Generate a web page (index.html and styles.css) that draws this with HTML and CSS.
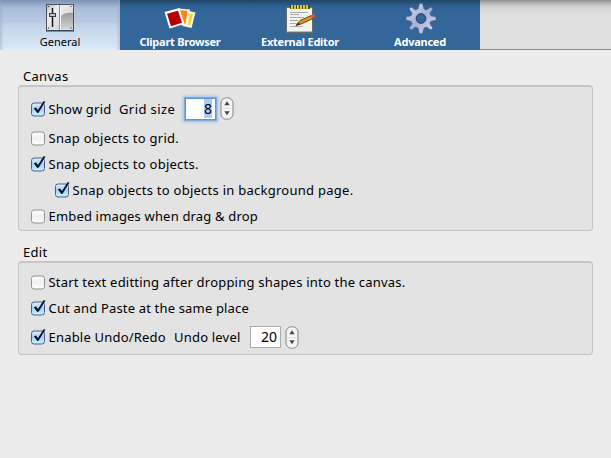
FILE: index.html
```
<!DOCTYPE html>
<html lang="en">
<head>
<meta charset="utf-8">
<title>Preferences</title>
<link rel="stylesheet" href="styles.css">
</head>
<body>
<svg width="0" height="0" class="defs" aria-hidden="true">
  <defs>
    <linearGradient id="blue" x2="0" y2="1"><stop stop-color="#e6f1ff"/><stop offset=".45" stop-color="#a5cef5"/><stop offset="1" stop-color="#c9f4ff"/></linearGradient>
    <linearGradient id="white" x2="0" y2="1"><stop stop-color="#fff"/><stop offset=".5" stop-color="#f0f0f0"/><stop offset="1" stop-color="#fff"/></linearGradient>
    <linearGradient id="metal" x2="1" y2="1"><stop stop-color="#b4b4b4"/><stop offset=".25" stop-color="#eee"/><stop offset="1" stop-color="#ccc"/></linearGradient>
    <linearGradient id="shade" x2="0" y2="1"><stop stop-color="#9c9c9c"/><stop offset="1" stop-color="#d5d5d5"/></linearGradient>
    <linearGradient id="steel" x2="1" y2="1"><stop stop-color="#d5dcef"/><stop offset=".5" stop-color="#a5b2d8"/><stop offset="1" stop-color="#e6e0f0"/></linearGradient>
    <symbol id="off" viewBox="0 0 18 18"><rect x="1.5" y="3" width="13" height="13" rx="2.5" fill="url(#white)" stroke="#929292"/></symbol>
    <symbol id="on" viewBox="0 0 18 18"><rect x="1.5" y="3" width="13" height="13" rx="2.5" fill="url(#blue)" stroke="#4f5c94"/><path d="M3.8 8.2 6 7.5 8 10 13.5 1.3 15.5 1.4 8.6 12.8 7.3 13Z" fill="#08142b"/></symbol>
    <symbol id="step" viewBox="0 0 14 23"><rect x="1" y=".8" width="12" height="21.4" rx="5.3" fill="#f5f5f5" stroke="#858585"/><path d="M2 11.5h10" stroke="#e1e1e1"/><path d="M4.3 8.3 7 4.3l2.7 4zM4.3 14.3 7 18.3l2.7-4z" fill="#484848"/></symbol>
  </defs>
</svg>
<nav class="toolbar">
  <div class="tab active">
    <svg width="36" height="36" viewBox="0 0 36 36"><rect x="4.5" y="4.5" width="27" height="26" fill="url(#metal)" stroke="#4b5058"/><path d="M18 17c3-4 8-5 13-4v17H18z" fill="url(#shade)"/><path d="M6 29h25" stroke="#ddd"/><path d="M17.5 5v25" stroke="#81929e"/><path d="M18.5 5v25" stroke="#f6f6f6"/><path d="M10.500 8v19" stroke="#11151a" stroke-width="1.5"/><rect x="7.5" y="13.5" width="6" height="3" fill="#b6c8dc" stroke="#263d57"/><path d="M6 6h1v1H6zM28.500 6h1v1h-1zM6 27.500h1v1H6zM28.500 27.500h1v1h-1z" fill="#222"/><path d="M4 31h28" stroke="#244267"/></svg>
    <span>General</span>
  </div>
  <div class="tab">
    <svg width="36" height="36" viewBox="0 0 36 36"><path d="m23 10 10.500 2.500-4 15.500-9-2z" fill="#f7f5e8"/><path d="m24 13 7 1.300-3 11-6-1z" fill="#efd726"/><path d="m16 8.500 12 1-2 16-9-.5z" fill="#fff4e4"/><path d="m18 10 7.500.8-2 13-5-.8z" fill="#ff850d"/><path d="m2.500 12 15-4 5 16-15 4.500z" fill="#fff"/><path d="m5 13.700 11-3 4 12-11 3.500z" fill="#b90000"/></svg>
    <span>Clipart Browser</span>
  </div>
  <div class="tab">
    <svg width="36" height="36" viewBox="0 0 36 36"><rect x="4.500" y="7.500" width="26" height="25" rx="1" fill="#f4f4ee" stroke="#696b68"/><path d="M5 31.500h25" stroke="#bbb"/><path d="M8 5h20v4H8z" fill="#4d4518"/><path d="M10 5v4.500m3-4.500v4.500m3-4.500v4.500m3-4.500v4.500m3-4.500v4.500m3-4.500v4.500" stroke="#f5df43" stroke-width="1.700"/><path d="M8 12.500h18m-18 2h9m-9 3h14m-14 3h8m-8 3h7m-7 3h13" stroke="#aaa"/><path d="m14 25.500 4-5 11.500-5 1.500 3-12 5.500z" fill="#d99726" stroke="#6b4315"/><path d="m29 15.300 2-1c2 0 3 2 1 3l-2 1z" fill="#e15443"/><path d="m14 25.500 3-3 1 2z" fill="#302316"/></svg>
    <span>External Editor</span>
  </div>
  <div class="tab">
    <svg width="36" height="36" viewBox="0 0 36 36"><path fill-rule="evenodd" d="m15 9 1.500-5.500h3L21 9l2.500 1 4.300-3 2 2-3 4.300 1 2.500 5.200 1.200v3l-5.200 1.200-1 2.500 3 4.300-2 2-4.300-3-2.500 1-1.500 5.500h-3L15 28l-2.500-1-4.300 3-2-2 3-4.300-1-2.500L3 20v-3l5.200-1.200 1-2.500-3-4.300 2-2 4.300 3zM18 13.500a5 5 0 1 0 0 10 5 5 0 0 0 0-10z" fill="url(#steel)" stroke="#56638b" stroke-width=".6"/><circle cx="18" cy="18.500" r="4.700" fill="none" stroke="#343d6b"/></svg>
    <span>Advanced</span>
  </div>
</nav>
<main>
  <h2>Canvas</h2>
  <section class="group canvas">
    <div class="row tall"><svg class="check"><use href="#on"/></svg><span class="t-show">Show grid</span><span class="t-size">Grid size</span><span class="field focus"><mark>8</mark></span><svg class="stepper"><use href="#step"/></svg></div>
    <div class="row"><svg class="check"><use href="#off"/></svg><span class="mid">Snap objects to grid.</span></div>
    <div class="row"><svg class="check"><use href="#on"/></svg><span class="mid">Snap objects to objects.</span></div>
    <div class="row sub"><svg class="check"><use href="#on"/></svg><span class="mid">Snap objects to objects in background page.</span></div>
    <div class="row"><svg class="check"><use href="#off"/></svg><span class="tight">Embed images when drag &amp; drop</span></div>
  </section>
  <h2>Edit</h2>
  <section class="group edit">
    <div class="row"><svg class="check"><use href="#off"/></svg><span class="snug">Start text editting after dropping shapes into the canvas.</span></div>
    <div class="row"><svg class="check"><use href="#on"/></svg><span class="tight">Cut and Paste at the same place</span></div>
    <div class="row tall"><svg class="check"><use href="#on"/></svg><span class="t-undo">Enable Undo/Redo</span><span class="t-level">Undo level</span><span class="field">20</span><svg class="stepper"><use href="#step"/></svg></div>
  </section>
</main>
</body>
</html>
```
FILE: styles.css
```
* { box-sizing: border-box; }
body { margin: 0; height: 458px; overflow: hidden; background: #ececec; color: #000; font: 13px/18px "Noto Sans", sans-serif; letter-spacing: .3px; }
.defs { position: absolute; }
.toolbar { height: 50px; display: flex; background: linear-gradient(#939393, #d0d0d0 6px, #e0e0e0 14px); border-bottom: 1px solid #888; }
.tab { width: 120px; height: 50px; display: flex; flex-direction: column; align-items: center; background: linear-gradient(#204566, #2e6092 6px, #336699 13px); color: #fff; font-size: 11px; font-weight: 700; line-height: 14px; letter-spacing: -.25px; white-space: nowrap; }
.tab svg { flex: none; margin-bottom: -1px; }
.tab:last-child svg { position: relative; left: 1px; }
.active { color: #000; font-weight: 400; letter-spacing: 0; background: linear-gradient(90deg, #8da5bd70, transparent 4px, transparent 116px, #8da5bd70), linear-gradient(#7c92b3, #a9bddb 8px, #b8cae3 22px, #bfd3e7 24px, #dceafa); }
main { padding: 17px 18px 0; }
h2 { margin: 0; padding-left: 5px; height: 18px; font-size: 13px; font-weight: 400; line-height: 18px; }
.group { border: 1px solid #c3c3c3; border-top: 2px solid #c6c6c6; border-radius: 4px; background: #e3e3e3; padding-left: 11px; }
.canvas { height: 146px; padding-top: 7px; margin-bottom: 12px; }
.edit { height: 94px; padding-top: 6px; }
.row { height: 26px; display: flex; align-items: center; white-space: nowrap; }
.tall { height: 32px; }
.canvas .tall { height: 29px; margin-bottom: 2px; }
.sub { padding-left: 24px; }
.check { width: 18px; height: 18px; margin-right: .5px; flex: none; }
.mid { letter-spacing: .26px; }
.snug { letter-spacing: .21px; }
.tight { letter-spacing: .17px; }
.t-show { width: 70.5px; letter-spacing: .2px; }
.t-size { width: 66px; letter-spacing: .4px; }
.t-undo { width: 125.5px; letter-spacing: .2px; }
.t-level { width: 76px; letter-spacing: .2px; }
.field { width: 31px; height: 22px; padding-right: 3px; background: #fff; border: 1px solid #aaa; text-align: right; line-height: 20px; font-size: 14px; letter-spacing: 0; }
.focus { border-color: #5b97d6; box-shadow: 0 0 0 1px #7eaadc, 0 0 3px 2px #9fc1e6; }
mark { background: #a9cdf8; color: #000; }
.stepper { width: 14px; height: 23px; margin-left: 3.5px; }
```
